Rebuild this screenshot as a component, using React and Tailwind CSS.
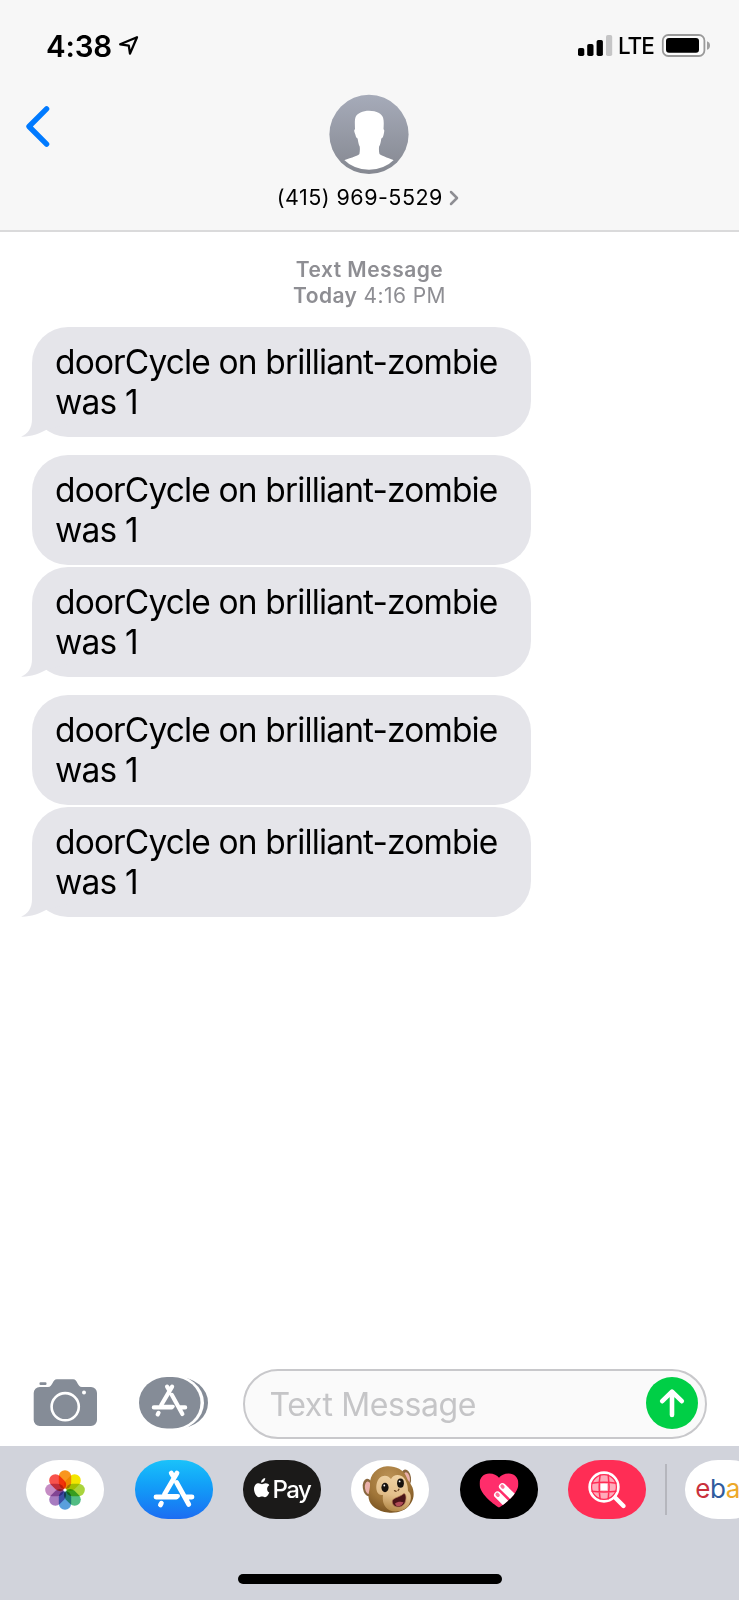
const font = 'font-[Inter,"Liberation_Sans",sans-serif]';

function LocationArrow() {
  return (
    <svg className="mt-[34px] ml-[7px] h-[22px] w-[22px]" viewBox="118 34 22 22" fill="none" stroke="#000" strokeWidth="2.3" strokeLinejoin="round">
      <path d="M137 37.2 120.2 44.3 128.8 45.6 130 53.6Z" />
    </svg>
  );
}

function StatusIcons() {
  return (
    <div className="ml-auto flex pr-[28px]">
      <svg className="mt-[34px] h-6 w-[36px]" viewBox="578 34 36 24">
        <rect x="579" y="48" width="6.3" height="8" rx="1.8" />
        <rect x="588.2" y="44" width="6.3" height="12" rx="1.8" />
        <rect x="597.6" y="40" width="6.3" height="16" rx="1.8" />
        <rect x="607" y="35" width="6.2" height="21" rx="1.8" fill="#c5c5c6" />
      </svg>
      <span className="mt-[32px] ml-[5px] w-[43px] text-[22.500px] leading-7 font-medium tracking-[-1px]">LTE</span>
      <svg className="mt-[32px] h-[28px] w-[50px]" viewBox="662 32 50 28">
        <rect x="663.8" y="35" width="41.6" height="21" rx="5.5" fill="#fbfbfb" stroke="#9a9a9a" strokeWidth="1.8" />
        <rect x="667" y="38" width="33" height="14.8" rx="3" />
        <path d="M708 41.2c2 .7 3 2.200 3 4.300s-1 3.600-3 4.300z" fill="#a0a0a0" />
      </svg>
    </div>
  );
}

function Avatar() {
  return (
    <svg className="ml-[-1px] h-[80px] w-[80px]" viewBox="0 0 80 80">
      <defs>
        <linearGradient id="avatar" x1="0" y1="0" x2="0" y2="1">
          <stop offset="0" stopColor="#a6abb9" />
          <stop offset="1" stopColor="#858891" />
        </linearGradient>
        <clipPath id="bust"><circle cx="40" cy="39" r="36.700" /></clipPath>
      </defs>
      <circle cx="40" cy="40.400" r="39.600" fill="url(#avatar)" />
      <path clipPath="url(#bust)" fill="#fff" d="M40 16.700c-6 0-12 2.500-13.500 6.500-1 3-.6 8-.5 12-1.500.5-.5 3 .4 5.500.5 2 1 3.500 2.200 3.800.6 3.500 1 6 2.100 8 .3 2.500.2 5-.3 7.500C28 62.500 20 64 12 67.500v12.500h56V67.500c-8-3.500-14-5-17.500-7.500-.6-2.500-.7-5-.4-7.500 1.300-2 1.700-4.500 2.200-8 1.300-.3 1.900-2 2.300-3.800.6-2.500 1.200-5-.1-5.500.2-4 .6-8-.4-11.500-1.400-4-6.100-7-14.100-7z" />
    </svg>
  );
}

function Header() {
  return (
    <header className="h-[232px] border-b-2 border-[#dadadb] bg-[#f7f7f7]">
      <div className="flex h-[94px]">
        <span className="mt-[28px] ml-[46px] w-[65px] text-[29.500px] leading-9 font-semibold tracking-[-0.2px] whitespace-nowrap">4:38</span>
        <LocationArrow />
        <StatusIcons />
      </div>
      <div className="grid grid-cols-[60px_1fr_60px]">
        <svg className="mt-[9px] ml-[23.500px] h-[48px] w-[28px]" viewBox="24 103 28 48" fill="none" stroke="#007aff" strokeWidth="5.400" strokeLinecap="round" strokeLinejoin="round">
          <path d="M46.600 108.800 29 126.500 46.600 144.200" />
        </svg>
        <div className="flex flex-col items-center">
          <Avatar />
          <div className="mt-[9px] ml-[-3px] flex items-center">
            <span className="text-[21.500px] leading-7 tracking-[0.480px] whitespace-nowrap">(415) 969-5529</span>
            <svg className="mt-[2px] ml-[6.500px] h-4 w-[10px]" viewBox="0 0 10 16" fill="none" stroke="#8e8e93" strokeWidth="2.500" strokeLinecap="round" strokeLinejoin="round">
              <path d="M2 2l6 6-6 6" />
            </svg>
          </div>
        </div>
      </div>
    </header>
  );
}

function Bubble({ tail, gap }) {
  return (
    <div className={"relative h-[110px] w-[499px] rounded-[36px] bg-[#e5e5ea] px-[23px] pt-[15px] " + gap}>
      {tail && (
        <svg className="absolute bottom-0 left-[-11px] h-[44px] w-[50px]" viewBox="0 0 50 44" fill="#e5e5ea">
          <path d="M11 0V26C11 35 7 41 0 43.600 9 44 18 41 25 37L50 30V0Z" />
        </svg>
      )}
      <p className="relative text-[33.500px] leading-10 tracking-[-0.860px] whitespace-nowrap text-black">doorCycle on brilliant-zombie<br />was 1</p>
    </div>
  );
}

function StoreGlyph({ x, y, s }) {
  return (
    <g transform={`translate(${x} ${y}) scale(${s})`} stroke="#fff" strokeWidth="4.800" strokeLinecap="round" fill="none">
      <path d="M-2.800-16 -.2-11.600M3-16-9.600 5.500M2.600-6.500 14.800 15.500M-18 8H2.500M11.500 8H18M-12.600 14.200-13.600 16" />
      <path d="M-9.600 7 4 7" strokeWidth="4" />
    </g>
  );
}

function Camera() {
  return (
    <svg className="h-[50px] w-[66px]" viewBox="32 1377 66 50">
      <path fill="#858c97" d="M40 1387h8c5 0 4-7.800 9-7.800h16c5 0 4 7.800 9 7.800h9a6 6 0 0 1 6 6v27a6 6 0 0 1-6 6H39.700a6 6 0 0 1-6-6v-27a6 6 0 0 1 6-6z" />
      <rect x="39.500" y="1382.200" width="7" height="2.800" rx="1" fill="#858c97" />
      <circle cx="65.200" cy="1406.700" r="13.600" fill="none" stroke="#fff" strokeWidth="2.600" />
      <circle cx="84" cy="1392.600" r="2" fill="#fff" />
    </svg>
  );
}

function AppsButton() {
  return (
    <svg className="ml-[39.500px] h-[54px] w-[72px]" viewBox="138 1376 72 54">
      <rect x="146" y="1377" width="62" height="51.500" rx="30" ry="25.700" fill="#858c97" />
      <rect x="134" y="1374" width="70" height="57.500" rx="34" ry="28.700" fill="#fff" />
      <rect x="139" y="1377" width="61.500" height="51.500" rx="28" ry="25.700" fill="#858c97" />
      <StoreGlyph x={169.5} y={1400.5} s={0.87} />
    </svg>
  );
}

function Composer() {
  return (
    <div className="flex h-[86px] items-start">
      <div className="mt-[17px] ml-[32px]"><Camera /></div>
      <div className="mt-[16px]"><AppsButton /></div>
      <div className="mt-[9px] ml-[33px] flex h-[70px] w-[464.500px] items-center justify-between rounded-full border-2 border-[#c8c8cb] bg-[#fafafa] pr-[7px] pl-[25px]">
        <span className="mt-px text-[32px] leading-10 tracking-[-0.4px] text-[#c5c5c7]">Text Message</span>
        <svg className="mb-[2px] h-[52px] w-[52px]" viewBox="0 0 52 52">
          <circle cx="26" cy="26" r="26" fill="#00cf46" />
          <path d="M26 38V15M16.200 24.200 26 14.600 35.800 24.200" fill="none" stroke="#fff" strokeWidth="4.600" strokeLinecap="round" strokeLinejoin="round" />
        </svg>
      </div>
    </div>
  );
}

const petals = ["#f9961e", "#f3e600", "#a9d43c", "#52bd84", "#5a9fdc", "#a77cc0", "#c58cc4", "#f8524c"];

function Photos() {
  return (
    <svg className="h-[44px] w-[44px]" viewBox="-22 -22 44 44">
      {petals.map((c, i) => (
        <rect key={c} x="-6.200" y="-19.800" width="12.400" height="18.800" rx="6.200" fill={c} className="mix-blend-multiply" transform={`rotate(${i * 45})`} />
      ))}
      <circle r="1.600" fill="#fff" />
    </svg>
  );
}

function ApplePay() {
  return (
    <div className="flex items-center text-white">
      <svg className="mt-[-3px] h-[20px] w-[16px]" viewBox="0 0 16 20" fill="#fff">
        <path d="M11.200 0c.2 2.400-1.700 4.600-4 4.700C7 2.500 9 .3 11.200 0zM15.300 14.500c-1 2.500-2.500 4.700-4.300 4.700-1.200 0-1.700-.7-3-.7s-1.900.7-3 .7C2.500 19.200 0 14.500 0 11c0-3.700 2.300-5.700 4.600-5.700 1.400 0 2.500.9 3.400.9.900 0 2.200-1 3.900-.9 1.500.1 2.700.7 3.400 1.900-3.100 1.900-2.600 6 0 7.300z" />
      </svg>
      <span className="ml-[3px] text-[24px] leading-7 font-medium tracking-[-1.500px]">Pay</span>
    </div>
  );
}

function Monkey() {
  return (
    <svg className="h-[50px] w-[52px] overflow-visible" viewBox="0 0 52 50">
      <defs>
        <radialGradient id="fur" cx=".45" cy=".25" r=".8">
          <stop offset="0" stopColor="#bc9256" />
          <stop offset=".6" stopColor="#a07538" />
          <stop offset="1" stopColor="#755020" />
        </radialGradient>
        <linearGradient id="face" x1=".6" y1="0" x2=".4" y2="1">
          <stop offset="0" stopColor="#efd2a4" />
          <stop offset=".55" stopColor="#e3bf8b" />
          <stop offset="1" stopColor="#b08645" />
        </linearGradient>
      </defs>
      <ellipse cx="4" cy="22.500" rx="5.200" ry="8.800" fill="#8a6840" transform="rotate(-8 4 22.500)" />
      <ellipse cx="4.300" cy="22.800" rx="3.400" ry="6.300" fill="#eab0aa" transform="rotate(-8 4 22.500)" />
      <ellipse cx="42" cy="13" rx="5" ry="8.600" fill="#8a6840" transform="rotate(-8 42 13)" />
      <ellipse cx="42.500" cy="13.500" rx="3.300" ry="6.300" fill="#eab0aa" transform="rotate(-8 42 13)" />
      <path fill="url(#fur)" d="M23 1.300C13 2 5.500 10 6 19c.3 5-2 9-1.300 14.500C6 41 14 46.500 24 47.500c9 1 18-2 22-8 4-5 4.500-11 2.500-17-1.500-4-5-7-6.500-11.500C39.500 4.500 31 .8 23 1.300z" />
      <path fill="url(#face)" d="M27 14c-3-4-8-4.500-11.500-1-3 3-4 9-2.500 13.500 1 3 3.500 3.500 6 3.500-1 6 1 13 7 15.500 7 2.500 15 0 18.500-5 3-5 3.500-11.500-.5-14.500 0-6-2-12.500-6.500-15-4-2-8.500-1-10.500 3z" />
      <ellipse cx="21" cy="22.500" rx="3.600" ry="4.700" fill="#17120e" />
      <ellipse cx="36.500" cy="18.200" rx="3.400" ry="4.600" fill="#17120e" />
      <circle cx="20.300" cy="20.500" r=".9" fill="#fff" /><circle cx="35.600" cy="16.400" r=".9" fill="#fff" />
      <path d="M30.500 25.600l1.600.7M35 24.200l-.9 1.300" stroke="#6b4522" strokeWidth="1.300" strokeLinecap="round" />
      <path fill="#4a1418" stroke="#b67b55" strokeWidth=".7" d="M29 34.500c3-2.500 8-3 11-6 2 .5 2.500 4 1.500 7.500-1 4-4 6-7.500 6-5 0-7-5-5-7.500z" />
      <path fill="#b04c58" d="M31 38.500c2-2 6-2.200 8.500-1.300-1 3-3.500 4.300-5.500 4.100-1.500 0-2.600-1.300-3-2.800z" />
    </svg>
  );
}

function Touch() {
  return (
    <svg className="mt-[2px] h-[37px] w-[42px]" viewBox="0 0 42 38">
      <defs>
        <clipPath id="heart"><path d="M21 36.500C14 32 1 22 1 12 1 5.500 5.500 1.500 11 1.500c4.500 0 8 1.800 10 4.500 2-2.700 5.500-4.500 10-4.500 5.500 0 10 4 10 10.500 0 10-13 20-20 24.500z" /></clipPath>
      </defs>
      <g clipPath="url(#heart)">
        <rect width="42" height="38" fill="#ff2d6b" />
        <g stroke="#fff" strokeWidth="7.200" strokeLinecap="round">
          <path d="M24.500 15 42 32M19.500 23.500 35 39" />
        </g>
        <g stroke="#ff6f98" strokeWidth="3.600" strokeLinecap="round">
          <path d="M24.200 14.500 25 15.300M19.200 23 20 23.800" />
        </g>
      </g>
    </svg>
  );
}

function ImageSearch() {
  return (
    <svg className="h-[40px] w-[40px]" viewBox="0 0 40 40">
      <path d="M27 26.500 36.500 36" stroke="#fff" strokeWidth="4.400" strokeLinecap="round" />
      <circle cx="17" cy="17" r="14.300" fill="#ffabba" stroke="#fff" strokeWidth="2.800" />
      <rect x="13.700" y="13.700" width="6.600" height="6.600" fill="#fff" />
      <g fill="none" stroke="#ff2d55" strokeWidth="1.500">
        <path d="M4.500 13.200Q17 11.200 29.500 13.200M4.500 21.200Q17 22.600 29.500 21.200M13.200 4.500Q11.200 17 13.200 29.500M21.200 4.500Q23 17 21.200 29.500" />
        <circle cx="17" cy="17" r="12.400" strokeWidth="1.200" />
      </g>
    </svg>
  );
}

function Pill({ bg, children }) {
  return <div className={"flex h-[59px] w-[78px] shrink-0 items-center justify-center rounded-[33px/29px] " + bg}>{children}</div>;
}

function Drawer() {
  return (
    <div className="flex h-[154px] flex-col items-center overflow-hidden bg-[#d1d3db]">
      <div className="flex w-full gap-[30.300px] pt-[14px] pl-[26.400px]">
        <Pill bg="bg-white"><Photos /></Pill>
        <Pill bg="bg-linear-to-b from-[#1bc2fa] to-[#1d6cf2]">
          <svg className="h-[44px] w-[48px]" viewBox="-24 -22 48 44"><StoreGlyph x={0} y={-1} s={1} /></svg>
        </Pill>
        <Pill bg="bg-[#1b1a19]"><ApplePay /></Pill>
        <Pill bg="bg-white"><Monkey /></Pill>
        <Pill bg="bg-black"><Touch /></Pill>
        <Pill bg="bg-[#ff2d55]"><ImageSearch /></Pill>
        <div className="mt-[4px] mr-[-12px] ml-[-11px] h-[51px] w-[2px] shrink-0 bg-[#b5b6bd]" />
        <Pill bg="bg-white">
          <span className="mt-[-2px] text-[26px] leading-8 tracking-[-0.500px]">
            <span className="text-[#c9313c]">e</span><span className="text-[#2f5c9e]">b</span><span className="text-[#eda92a]">a</span><span className="text-[#85b716]">y</span>
          </span>
        </Pill>
      </div>
      <div className="mt-[55px] h-[10px] w-[264px] shrink-0 rounded-full bg-black" />
    </div>
  );
}

export default function App() {
  return (
    <div className={"flex h-[1600px] w-[739px] flex-col overflow-hidden bg-white text-black " + font}>
      <Header />
      <main className="flex-1 pl-[32px]">
        <div className="mt-[25px] ml-[-32px] text-center text-[21px] leading-[25.500px] text-[#8e8e93]">
          <div className="font-semibold tracking-[0.480px]">Text Message</div>
          <div className="tracking-[0.400px]"><span className="font-semibold">Today</span> 4:16 PM</div>
        </div>
        <Bubble tail gap="mt-[18.800px]" />
        <Bubble gap="mt-[18px]" />
        <Bubble tail gap="mt-[2.300px]" />
        <Bubble gap="mt-[18px]" />
        <Bubble tail gap="mt-[2.300px]" />
      </main>
      <Composer />
      <Drawer />
    </div>
  );
}
